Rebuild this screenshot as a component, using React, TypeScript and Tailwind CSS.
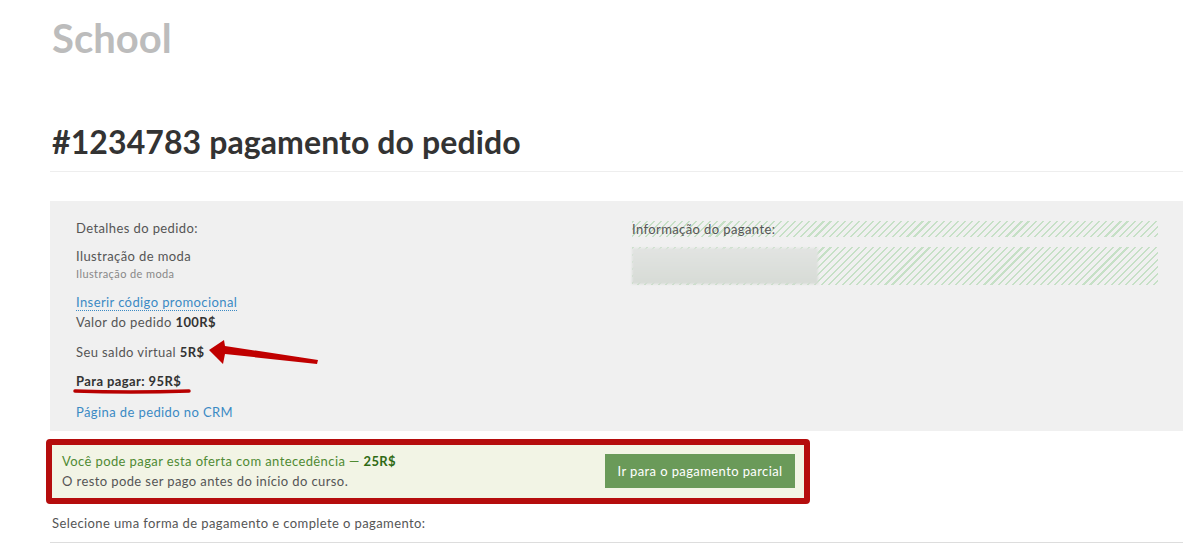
import React from "react";

const hatch =
  "bg-[image:repeating-linear-gradient(135deg,#c6e0c6_0px,#c6e0c6_1.5px,transparent_1.5px,transparent_5px)]";

export default function App() {
  return (
    <div
      className="relative min-h-[550px] bg-white text-[13px] tracking-[0.4px] text-[#555]"
      style={{ fontFamily: "Lato, 'Open Sans', Arial, sans-serif" }}
    >
      <div className="ml-[50px] mr-[17px]">
        <div className="pt-[13px] pl-[2px] text-[40px] font-bold leading-[50px] tracking-normal text-[#bcbcbc]">
          School
        </div>
        <h1 className="mt-[59px] pl-[2px] text-[32px] font-bold leading-[40px] tracking-[0.1px] text-[#333]">
          #1234783 pagamento do pedido
        </h1>
        <div className="mt-[9px] h-px bg-[#eeeeee]" />

        <div className="mt-[29px] flex bg-[#f0f0f0] pt-[17px] pb-[9px] pl-[26px] pr-[25px]">
          <div className="w-[556px] shrink-0 leading-[20px]">
            <div>Detalhes do pedido:</div>
            <div className="mt-[8px]">Ilustração de moda</div>
            <div className="text-[11px] leading-[16px] text-[#888]">Ilustração de moda</div>
            <div className="mt-[10px]">
              <span className="border-b border-dotted border-[#3b8ac4] text-[#3b8ac4]">
                Inserir código promocional
              </span>
            </div>
            <div>
              Valor do pedido <b className="text-[#333]">100R$</b>
            </div>
            <div className="mt-[10px]">
              Seu saldo virtual <b className="text-[#333]">5R$</b>
            </div>
            <div className="mt-[9px] font-bold text-[#333]">Para pagar: 95R$</div>
            <div className="mt-[11px] text-[#3b8ac4]">Página de pedido no CRM</div>
          </div>
          <div className="flex-1">
            <div className={`mt-[3px] h-[16px] leading-[16px] ${hatch}`}>Informação do pagante:</div>
            <div className={`mt-[10px] h-[38px] ${hatch} py-[1px]`}>
              <div className="h-full w-[186px] bg-[linear-gradient(180deg,#e2e4e2,#d7dbd6)] blur-[1px]" />
            </div>
          </div>
        </div>

        <div className="mt-[8px] -ml-[4px] flex w-[764px] items-center justify-between rounded-[4px] border-[6px] border-[#b50d0d] bg-[#f2f4e5] pt-[6px] pb-[7px] pl-[10px] pr-[9px] leading-[20px]">
          <div>
            <div className="text-[#4f8a33]">
              Você pode pagar esta oferta com antecedência — <b className="text-[#2f6a14]">25R$</b>
            </div>
            <div>O resto pode ser pago antes do início do curso.</div>
          </div>
          <button className="h-[34px] w-[190px] bg-[#6a9a59] text-center text-[13px] tracking-[0.4px] text-white">
            Ir para o pagamento parcial
          </button>
        </div>

        <div className="mt-[9px] pl-[2px] leading-[20px]">
          Selecione uma forma de pagamento e complete o pagamento:
        </div>
        <div className="mt-[9px] h-px bg-[#dddddd]" />
      </div>

      <svg className="pointer-events-none absolute left-0 top-0" width="1200" height="550">
        <polygon points="209,350 224,340 225,346 318,360 317,364 225,354 223,364" fill="#c00000" />
        <path d="M75 391 Q 130 393 189 391" stroke="#b80000" strokeWidth="3.5" strokeLinecap="round" fill="none" />
      </svg>
    </div>
  );
}
